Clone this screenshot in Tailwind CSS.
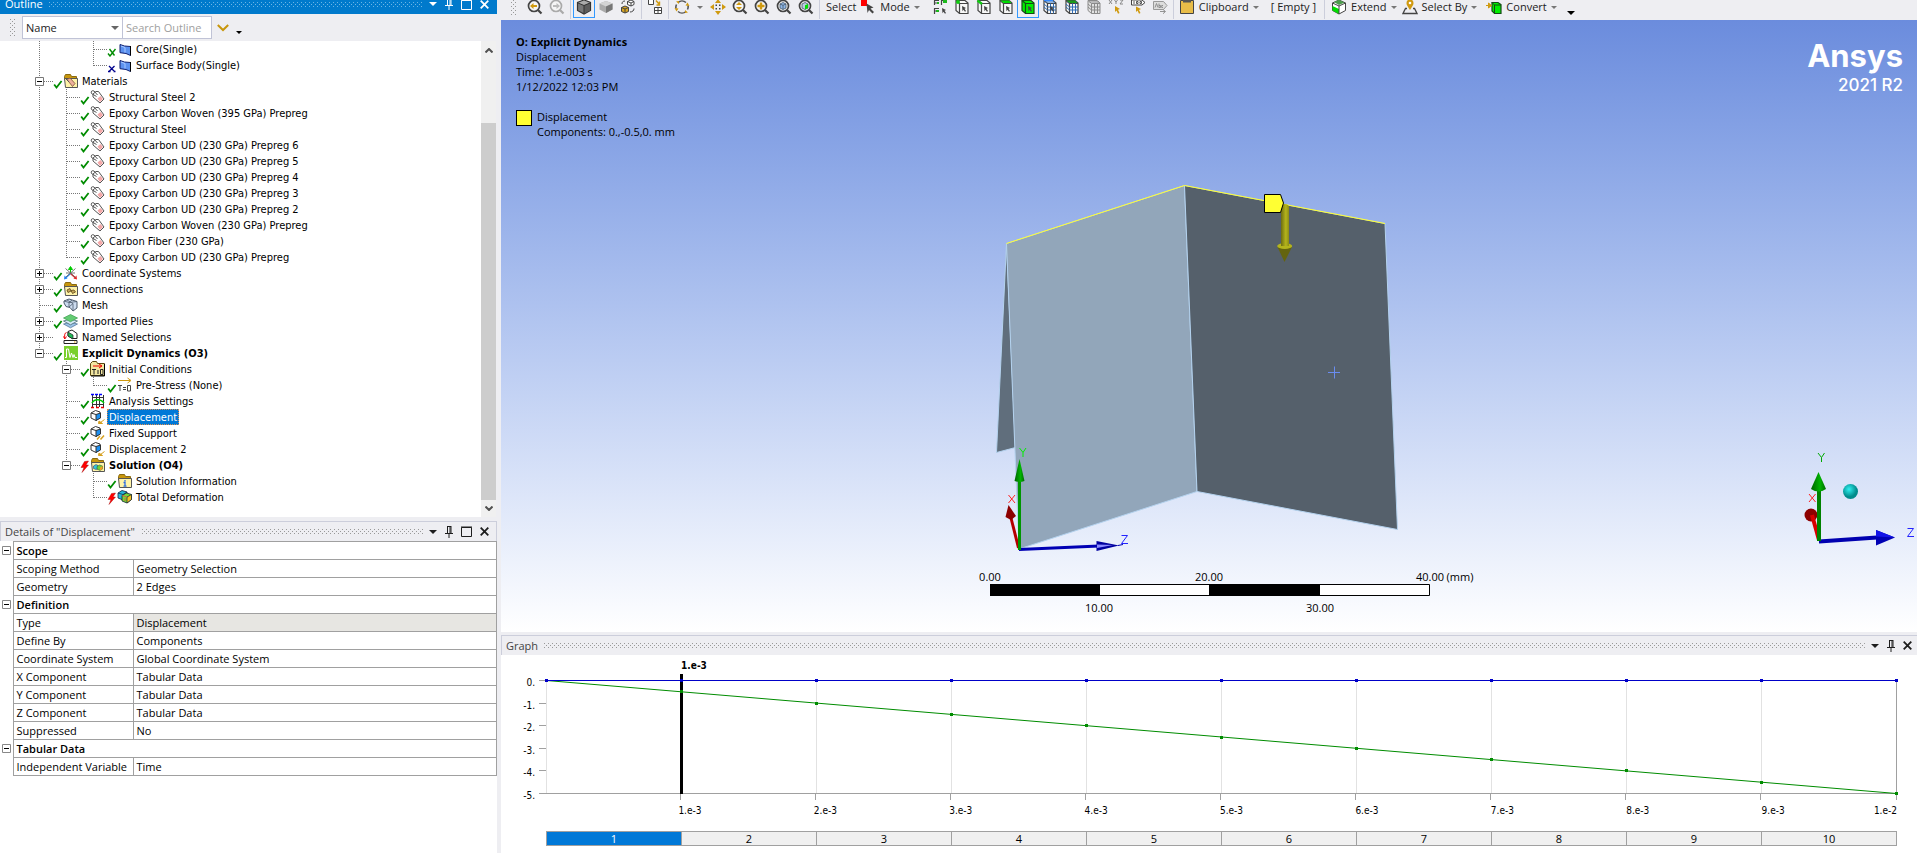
<!DOCTYPE html>
<html lang="en">
<head>
<meta charset="utf-8">
<title>Explicit Dynamics - Mechanical</title>
<script src="https://cdn.jsdelivr.net/npm/@tailwindcss/browser@4"></script>
</head>
<body class="h-screen overflow-hidden bg-[#eeeef2] font-['Open_Sans','Noto_Sans',sans-serif] text-[11px] leading-4 text-[#111]">

<!-- Shared icon definitions -->
<svg class="absolute size-0" aria-hidden="true">
  <defs>
    <pattern id="dotsBlue" width="4" height="4" patternUnits="userSpaceOnUse"><path d="M0 0h1v1H0zM2 2h1v1H2z" fill="#6bb5e6"/></pattern>
    <pattern id="dotsGray" width="4" height="4" patternUnits="userSpaceOnUse"><path d="M0 0h1v1H0zM2 2h1v1H2z" fill="#999"/></pattern>
    <radialGradient id="ball" cx=".4" cy=".35"><stop offset="0" stop-color="#30f0f0"/><stop offset="1" stop-color="#008c8c"/></radialGradient>
    <linearGradient id="shaft"><stop offset="0" stop-color="#6e6e10"/><stop offset=".6" stop-color="#b4b41c"/><stop offset="1" stop-color="#8c8c14"/></linearGradient>
    <linearGradient id="greenHead"><stop offset="0" stop-color="#006400"/><stop offset=".6" stop-color="#00b400"/><stop offset="1" stop-color="#006e00"/></linearGradient>
  </defs>

  <!-- window controls -->
  <symbol id="caret" viewBox="0 0 8 4"><path d="M0 0h8L4 4z" fill="currentColor"/></symbol>
  <symbol id="pin" viewBox="0 0 8 12"><path d="M2 .5h4M2.5 0v7M5 0v7M6 0v7M0 7.5h8M4 8v4" stroke="currentColor" fill="none"/></symbol>
  <symbol id="max" viewBox="0 0 11 11"><path d="M.5 1.5h10v9H.5zM0 1h11" stroke="currentColor" fill="none"/></symbol>
  <symbol id="close" viewBox="0 0 9 9"><path d="M.7.7l7.6 7.6M8.3.7L.7 8.3" stroke="currentColor" stroke-width="1.8" fill="none"/></symbol>
  <symbol id="grip" viewBox="0 0 5 18"><path d="M0 0h1v1H0zM4 0h1v1H4zM2 2h1v1H2zM0 4h1v1H0zM4 4h1v1H4zM2 6h1v1H2zM0 8h1v1H0zM4 8h1v1H4zM2 10h1v1H2zM0 12h1v1H0zM4 12h1v1H4zM2 14h1v1H2zM0 16h1v1H0zM4 16h1v1H4z" fill="#999"/></symbol>

  <!-- status marks -->
  <symbol id="ok" viewBox="0 0 10 16"><path d="M1.2 11.5l2.3 3L8.6 8" stroke="#008c00" stroke-width="1.8" fill="none"/></symbol>
  <symbol id="okx" viewBox="0 0 10 16"><path d="M1 12.5l2 2.5L8.5 8M2.5 8l5 6.5" stroke="#008c00" stroke-width="1.4" fill="none"/></symbol>
  <symbol id="bluex" viewBox="0 0 10 16"><path d="M2 9l5.5 5.5M7.5 9L2 14.5M1 14.5h2.500M6.5 14.5H8.5" stroke="#00008c" stroke-width="1.3" fill="none"/></symbol>
  <symbol id="bolt" viewBox="0 0 10 16"><path d="M4.5 4.5L8.5 4 6 8h2.500L2 15.5 4 10.5H1z" fill="#f00" stroke="#900" stroke-width=".4"/></symbol>

  <!-- tree icons -->
  <symbol id="surface" viewBox="0 0 15 16"><path d="M3 3.500l4.500 1.500 6 .5v9L9 12.500l-6-.8z" fill="#5c92f0" stroke="#102070"/><path d="M4 5l4 1.500v5" stroke="#a8c8ff" fill="none"/><path d="M13.500 5v9.500" stroke="#000"/></symbol>
  <symbol id="folder" viewBox="0 0 15 16"><path d="M1.500 3.500l1-2h5l1 2h5v3h-12z" fill="#c8960c" stroke="#8a6a10"/><path d="M1.500 5.500h13v9h-12z" fill="#fff3a8" stroke="#555"/></symbol>
  <symbol id="materials" viewBox="0 0 15 16"><use href="#folder"/><path d="M4 6.500l3-1.500 5 5.500-2.500 3z" fill="#eeb09c" stroke="#7a5038" stroke-width=".8"/><path d="M3 6l3 3" stroke="#555"/></symbol>
  <symbol id="tag" viewBox="0 0 15 16"><path d="M3 8V5l3-2.500h2.500l5.500 7.500-4 4z" fill="#fff" stroke="#555"/><path d="M7.500 9.500L10.500 7l2.500 3-3 3z" fill="#f4a8a8"/><path d="M6.500 7.500L1.500 4.500C.5 2.500 2 1 4 2l3.500 4" fill="none" stroke="#555"/></symbol>
  <symbol id="coords" viewBox="0 0 15 16"><path d="M7.500 8.500V2.500M5.500 4.500l2-3 2 3z" stroke="#0c0" fill="#0c0"/><path d="M7.500 8.500L2 13.500" stroke="#28f" stroke-width="1.400"/><path d="M1 14.500l.5-4 3 3z" fill="#28f"/><path d="M7.500 8.500l5 4.500" stroke="#e22" stroke-width="1.400"/><path d="M14 14.500l-.5-4-3 3z" fill="#e22"/><path d="M2.500 3.500l10 9M12.500 3.500l-10 9M3 8h9" stroke="#666" stroke-width=".9"/></symbol>
  <symbol id="connections" viewBox="0 0 15 16"><use href="#folder"/><path d="M4 9l3-1.500 1 2.500-3 1.500zM8 9.500l3-.5 1.500 2-3 1.500z" fill="#c9a85c" stroke="#6b5420" stroke-width=".9"/></symbol>
  <symbol id="mesh" viewBox="0 0 15 16"><path d="M1 4l5-2 8 2.500v6.500l-4 3-3-3.500-4-1L1 6z" fill="#cddcf0" stroke="#4c5a6c"/><path d="M1 4l5 1.500 8-1M6 5.500V10l4-3.500V13M4 3l6 3.500M9 3L6 5.500" fill="none" stroke="#4c5a6c" stroke-width=".8"/></symbol>
  <symbol id="plies" viewBox="0 0 15 16"><path d="M.5 11l7 3.800 7-3.800-7-2z" fill="#9cc3e8" stroke="#456a90" stroke-width=".7"/><path d="M.5 8l7 3.800 7-3.800-7-2z" fill="#d6e9fa" stroke="#456a70" stroke-width=".8"/><path d="M.5 5l7-3.500 7 3.500-7 3.800z" fill="#64cc74" stroke="#3a9c4c" stroke-width=".7"/></symbol>
  <symbol id="named" viewBox="0 0 15 16"><path d="M1 11.500h13v3H1z" fill="#fff" stroke="#222"/><path d="M5 2.500l4-1.500 5 3.500v5H9L5 7z" fill="#fff" stroke="#222"/><path d="M5 3l5 3v4L5 7z" fill="#1db954" stroke="#222" stroke-width=".7"/><path d="M3.500 3.500C1.500 4 1.500 6 1.800 9M.5 7.500L1.800 10l1.700-2.500" stroke="#e00" fill="none"/><path d="M11 13h1.500" stroke="#d90"/></symbol>
  <symbol id="explicit" viewBox="0 0 15 16"><path d="M1 1h14v14H1z" fill="#7ad02c"/><path d="M2 12.500h1.500V4h2l1.500 8.500L8.500 8l1.500 4.500 1-3 1 3h2" stroke="#fff" fill="none"/></symbol>
  <symbol id="initial" viewBox="0 0 15 16"><path d="M.5 14.500V2.500l2-2h4l1 2h7v12z" fill="#f2e6a0" stroke="#5a4a10"/><path d="M14.500 3v12H1" stroke="#000" fill="none"/><path d="M3 5h8M9 3l3 2-3 2" stroke="#e00" fill="none"/><path d="M2 8.500h4M4 8.500v5M7 10h2M7 12h2M10.500 8.500h2.500v5h-2.500z" stroke="#222" fill="none"/></symbol>
  <symbol id="prestress" viewBox="0 0 15 16"><path d="M1 3.500h12M10.500 1l3.500 2.500L10.500 6" stroke="#d09a10" fill="none"/><path d="M1 8.500h4M3 8.500V14M6 10.500h3M6 12.500h3M10.500 8.500h3V14h-3z" stroke="#444" fill="none"/></symbol>
  <symbol id="analysis" viewBox="0 0 15 16"><path d="M2.500 2v12M6.500 2v12M9.500 2v12M13.500 2v12M2 4.500h12M2 11.500h12" stroke="#333" fill="none"/><path d="M2 10C4 5.500 11 5.500 14 10" stroke="#0c0" stroke-width="1.500" fill="none"/><path d="M1 1.500h3M5 1.500h3M9 1.500h3" stroke="#00f" stroke-width="1.400"/><path d="M1 14.500h3M6 14.500h3M11 14.500h3" stroke="#e00" stroke-width="1.400"/></symbol>
  <symbol id="load" viewBox="0 0 15 16"><path d="M1 4l4.500-2.500L10 3v5.500L6 11.500 1 9z" fill="#fff" stroke="#333"/><path d="M6 5.500L10.500 4v5L6 11.500z" fill="#1e90f0" stroke="#333"/><path d="M1 4l5 1.500" stroke="#333"/></symbol>
  <symbol id="displ" viewBox="0 0 15 16"><use href="#load"/><path d="M14.500 10.500l-4 3M9 12l-.5 2.500 4 0z" stroke="#d6a020" fill="#d6a020"/></symbol>
  <symbol id="fixed" viewBox="0 0 15 16"><use href="#load"/><path d="M7 14.500l3-3.500M10.500 14.500l3.500-4" stroke="#d6a020" stroke-width="1.500"/></symbol>
  <symbol id="solution" viewBox="0 0 15 16"><use href="#folder"/><path d="M3.500 9L6 7.500l2 1V12l-2 .5-2.500-1z" fill="#35c6d8" stroke="#226" stroke-width=".5"/><path d="M7 9.500L9.500 8l3 1v3L10 13.500 7 12z" fill="#6dd03a" stroke="#243" stroke-width=".5"/><path d="M10 10.500l2.500-1.500v3L10 13.500z" fill="#f6a020"/></symbol>
  <symbol id="info" viewBox="0 0 15 16"><use href="#folder"/><path d="M8 7v1.500M6.500 9.500H8V13M6.500 13.200h3" stroke="#2a6be0" stroke-width="1.300" fill="none"/></symbol>
  <symbol id="deform" viewBox="0 0 15 16"><path d="M1 4l4-2.500L10 3v5l-4 3-5-2z" fill="#28b8d8" stroke="#124" stroke-width=".8"/><path d="M1 4l5 1.500L10 3" stroke="#124" stroke-width=".7" fill="none"/><path d="M5 6.500L9.500 4l5 1.500v5L10 14l-5-2z" fill="#76d838" stroke="#123" stroke-width=".8"/><path d="M10 8l4.500-2.500v5L10 14z" fill="#f6c020" stroke="#123" stroke-width=".7"/><path d="M5 6.500L10 8M8 9v3" stroke="#e44" stroke-width=".8"/></symbol>

  <!-- toolbar icons -->
  <symbol id="mag" viewBox="0 0 16 16"><circle cx="7" cy="7" r="5.500" fill="#f6f6f6" stroke="currentColor" stroke-width="1.700"/><path d="M11 11l3.500 3.500" stroke="currentColor" stroke-width="2.200"/></symbol>
  <symbol id="tback" viewBox="0 0 16 16"><use href="#mag"/><path d="M3 7l3.500-3v2h3.500v2H6.500v2z" fill="#d09a10"/></symbol>
  <symbol id="tfwd" viewBox="0 0 16 16"><use href="#mag"/><path d="M11 7L7.500 4v2H4v2h3.500v2z" fill="#bbb"/></symbol>
  <symbol id="tcube" viewBox="0 0 16 16"><path d="M8 1l6.500 2.500v8L8 15l-6.500-3.500v-8z" fill="#777" stroke="#333" stroke-width="1.200"/><path d="M8 1.500L14 4 8 6.500 2 4z" fill="#aaa"/><path d="M8 6.500L14 4v7.300L8 14.500z" fill="#5c5c5c"/><path d="M2 4l6 2.500L14 4M8 6.500v8" stroke="#333" fill="none"/></symbol>
  <symbol id="tshade" viewBox="0 0 16 16"><path d="M8 2l6.500 2.500v6L8 14l-6.500-3.500v-6z" fill="#aaa"/><path d="M8 2l6.500 2.500L8 7.500 1.500 4.500z" fill="#d4d4d4"/><path d="M8 7.500l6.500-3v6L8 14z" fill="#777"/></symbol>
  <symbol id="tswap" viewBox="0 0 16 16"><path d="M7.500 2.500L11 1l3 1.500v3l-3 1.500-3.500-1.500z" fill="#fff" stroke="#444"/><path d="M7.500 2.500L11 4v3M11 4l3-1.500" fill="none" stroke="#444"/><path d="M1.500 8.500L5 7l3.500 1.500v4L5 14l-3.500-1.500z" fill="#d8a420" stroke="#444"/><path d="M1.500 8.500L5 10l3.500-1.500M5 10v4M2 5c0-2 1-3 3-3M14 9.500c0 2-1.500 3.500-4 3.500" fill="none" stroke="#444"/></symbol>
  <symbol id="tlayout" viewBox="0 0 16 16"><path d="M1.500.5h5v5h-5z" fill="#fff" stroke="#444"/><path d="M7.500 8.500h7v6h-7zM11 8.500v6M7.500 11.500h7" fill="#fff" stroke="#444"/><path d="M9 1.500l3 3.500M12.500 2.500V6H9.500" stroke="#d09a10" fill="none" stroke-width="1.400"/></symbol>
  <symbol id="trotate" viewBox="0 0 16 16"><path d="M4 3.500A6 6 0 0112 3.500M4 12.500A6 6 0 0012 12.500M2 9.500A6 6 0 012.500 5.500M14 6.500A6 6 0 0113.500 10.500" fill="none" stroke="#555" stroke-width="1.600"/><path d="M2 2.500L5 2v3zM14 13.500L11 14v-3zM.5 9l2 3.500L4.500 9.500zM15.500 7l-2-3.500-2 3z" fill="#d09a10"/></symbol>
  <symbol id="tpan" viewBox="0 0 16 16"><path d="M8 0l3 4H5zM8 16l3-4H5zM0 8l4-3v6zM16 8l-4-3v6z" fill="#d09a10"/><path d="M5.500 5.500h1.500v1.500h-1.500zM9 5.500h1.500v1.500H9zM5.500 9H7v1.500H5.500zM9 9h1.500v1.500H9z" fill="#444"/></symbol>
  <symbol id="tzoom" viewBox="0 0 16 16"><use href="#mag"/><path d="M7 3l3 3H4zM7 11l3-3H4z" fill="#d09a10"/></symbol>
  <symbol id="tplus" viewBox="0 0 16 16"><use href="#mag"/><path d="M7 3.500v7M3.500 7h7" stroke="#d09a10" stroke-width="2.400"/></symbol>
  <symbol id="tfit" viewBox="0 0 16 16"><use href="#mag"/><path d="M7 3.500L10 5v4l-3 1.500L4 9V5z" fill="#8fb8ea" stroke="#456" stroke-width=".8"/><path d="M4 5l3 1.300L10 5M7 6.300v4" stroke="#456" stroke-width=".8" fill="none"/></symbol>
  <symbol id="tfitg" viewBox="0 0 16 16"><use href="#mag"/><path d="M7 3.500L10 5v4l-3 1.500L4 9V5z" fill="#bcd" stroke="#456" stroke-width=".8"/><path d="M7 6.300L10 5v4l-3 1.500z" fill="#0d0"/></symbol>
  <symbol id="tmode" viewBox="0 0 16 16"><path d="M1 0h6v7H1z" fill="#f00"/><path d="M6.500 4.500l7 4-3 1 3.500 3.500-1.500 1.500L9 11l-1.500 3z" fill="#444"/></symbol>
  <symbol id="tfilter" viewBox="0 0 16 16"><path d="M2 1.500h5M2.500 1.500V6M2 9.500h5M2.500 9.500V15M9 1.500h6M9.500 1.500V6M2 4h4M2 12h4" stroke="#444" fill="none" stroke-width="1.200"/><path d="M11 1h4v3h-4zM5 3h2v2H5zM4 11h3v2H4z" fill="#1cb81c"/><path d="M10 9l4 2-1.500.8L14 14l-1 .8-1.500-2-1 1.500z" fill="#444"/></symbol>
  <symbol id="tbox" viewBox="0 0 16 16"><path d="M2 1.500h9L14 4v10.500H5.500L2 11.500z" fill="#f8f8f8" stroke="#444" stroke-width="1.200"/><path d="M2 1.500L5.500 4.500H14M5.500 4.500v10" stroke="#444" stroke-width="1.200" fill="none"/></symbol>
  <symbol id="tptr" viewBox="0 0 16 16"><path d="M8 7l4 2-1.500.8L12 12l-1 .8-1.500-2-1 1.500z" fill="#444"/></symbol>
  <symbol id="tvertex" viewBox="0 0 16 16"><use href="#tbox"/><circle cx="4" cy="3" r="2" fill="#1c1"/><use href="#tptr"/></symbol>
  <symbol id="tedge" viewBox="0 0 16 16"><use href="#tbox"/><path d="M1.500 1.500L6 5" stroke="#1c1" stroke-width="2.400"/><use href="#tptr"/></symbol>
  <symbol id="tface" viewBox="0 0 16 16"><use href="#tbox"/><path d="M2.500 1.500H11L13.500 4h-8z" fill="#0d0"/><use href="#tptr"/></symbol>
  <symbol id="tbody" viewBox="0 0 16 16"><path d="M2 1.500h9L14 4v10.500H5.500L2 11.500z" fill="#0e0" stroke="#154a15" stroke-width="1.200"/><path d="M2 1.500L5.500 4.500H14M5.500 4.500v10" stroke="#154a15" stroke-width="1.200" fill="none"/><use href="#tptr"/></symbol>
  <symbol id="tgrid" viewBox="0 0 16 16"><use href="#tbox"/><path d="M5.500 8H14M5.500 11H14M8.500 4.500v10M11.500 4.500v10M3.500 3H13M2 5l3.500 3M2 8l3.500 3" stroke="currentColor" fill="none"/></symbol>
  <symbol id="tgrida" viewBox="0 0 16 16"><use href="#tgrid"/><path d="M2 1.500h9" stroke="#38f" stroke-width="1.500"/><use href="#tptr"/></symbol>
  <symbol id="tgridb" viewBox="0 0 16 16"><use href="#tgrid"/><path d="M2.500 1.500H11L13.500 4h-8z" fill="#1a9c1a"/></symbol>
  <symbol id="tgridc" viewBox="0 0 16 16"><path d="M2 1.500h9L14 4v10.500H5.500L2 11.500zM2 1.500L5.500 4.500H14M5.500 4.500v10M5.500 8H14M5.500 11H14M8.500 4.500v10M11.500 4.500v10M3.500 3H13M2 5l3.500 3M2 8l3.500 3" fill="#e2e2e2" stroke="#8a8a8a"/></symbol>
  <symbol id="txyz" viewBox="0 0 16 16"><path d="M1 1l3 4M4 1L1 5M6.500 1L8 3l1.500-2M8 3v2M12 1h3l-3 4h3" stroke="#888" fill="none"/><path d="M7 7l5 3-2 .8 1.500 3.200-1.500.8-1.500-3.300L7 13z" fill="#d09a10"/></symbol>
  <symbol id="tprobe" viewBox="0 0 16 16"><path d="M1.500 1h10.500l3 2.500-3 2.500H1.500z" fill="#fff" stroke="#444"/><path d="M4 2v3M6.500 2.500h1.500v2H6.500zM10 2.500h1.500v2H10z" stroke="#444" fill="none" stroke-width=".9"/><path d="M6 7.500l5 2.500-2 1 1.500 3-1.500.8-1.500-3.300L6 13z" fill="#d09a10"/></symbol>
  <symbol id="tabc" viewBox="0 0 16 16"><path d="M1.500 2.500h10l3.500 4-3.500 4h-10z" fill="#ddd" stroke="#999"/><path d="M3 8.500l1.500-4L6 8.500M7 4.500v4h1.500v-2H7M11 6.500H9.700v2H11M8 12.500h5M11 10.500l2.500 2-2.500 2.200" stroke="#888" fill="none" stroke-width=".9"/></symbol>
  <symbol id="tclip" viewBox="0 0 16 16"><path d="M1.500 1.500h13v13h-13z" fill="#e8bc48" stroke="#444"/><path d="M4 .5h8v3H4z" fill="#555"/></symbol>
  <symbol id="textend" viewBox="0 0 16 16"><path d="M8 1l6.500 3v7.500L8 15l-6.500-3.500V4z" fill="#fff" stroke="#444"/><path d="M1.500 7L8 10v5l-6.500-3.500z" fill="#0d0"/><path d="M3 3L8 .8 13.500 3.500 8 6z" fill="#4c9c4c"/><path d="M1.500 4L8 7l6.500-3M8 7v8" stroke="#444" fill="none"/></symbol>
  <symbol id="tselby" viewBox="0 0 16 16"><path d="M8 11C5.500 7 4.500 6 4.500 4a3.500 3.500 0 017 0c0 2-1 3-3.500 7z" fill="#d09a10"/><circle cx="8" cy="4" r="1.300" fill="#fff"/><path d="M5 9.500H3.500L1 14.500h14L12.500 9.500H11" fill="none" stroke="#444" stroke-width="1.300"/></symbol>
  <symbol id="tconvert" viewBox="0 0 16 16"><path d="M6 3.500h6l3 2v9H8.500L6 12z" fill="#0e0" stroke="#154a15" stroke-width="1.200"/><path d="M6 3.500L8.500 6H15M8.500 6v8.500" stroke="#154a15" fill="none"/><path d="M0 6.500h4M2.500 4l3 2.500-3 2.500z" stroke="#d09a10" fill="#d09a10"/></symbol>
</svg>

<div class="flex h-screen gap-1">

  <!-- Left dock -->
  <aside class="flex w-[497px] shrink-0 flex-col gap-1">

    <section class="flex min-h-0 flex-1 flex-col" aria-label="Outline">
      <div class="flex h-3.5 shrink-0 items-end overflow-hidden bg-[#007acc] text-white">
        <header class="flex h-5 flex-1 shrink-0 items-center pl-[5px] pr-2">
          <h2 class="mr-1.5">Outline</h2>
          <svg class="h-[5px] flex-1"><rect width="100%" height="5" fill="url(#dotsBlue)"/></svg>
          <div class="ml-1.5 flex items-center gap-2">
            <button aria-label="Menu"><svg class="h-1 w-2"><use href="#caret"/></svg></button>
            <button aria-label="Pin"><svg class="h-3 w-2"><use href="#pin"/></svg></button>
            <button aria-label="Maximize"><svg class="size-[11px]"><use href="#max"/></svg></button>
            <button aria-label="Close"><svg class="size-[9px]"><use href="#close"/></svg></button>
          </div>
        </header>
      </div>

      <div class="flex h-[27px] shrink-0 items-center pl-2.5">
        <svg class="mr-[7px] h-[18px] w-[5px]"><use href="#grip"/></svg>
        <div class="relative">
          <select aria-label="Search by" class="h-[23px] w-[101px] appearance-none border border-[#c0c3d6] bg-white pl-[3px] text-[11px] text-[#222]"><option>Name</option><option>Tag</option><option>Type</option></select>
          <svg class="pointer-events-none absolute right-1 top-2.5 h-1 w-2 text-[#666]"><use href="#caret"/></svg>
        </div>
        <input type="text" aria-label="Search Outline" placeholder="Search Outline" class="h-[23px] w-[89px] border border-l-0 border-[#c0c3d6] bg-white pl-[3px] text-[11px] placeholder:text-[#a0a0a0]">
        <button aria-label="Next match" class="ml-[5px]"><svg class="h-2 w-3" viewBox="0 0 12 8"><path d="M.8 1l5.200 5L11.200 1" stroke="#c8960c" stroke-width="2" fill="none"/></svg></button>
        <button aria-label="Toolbar options" class="ml-[7px] mt-2.5 text-black"><svg class="h-[3px] w-1.5"><use href="#caret"/></svg></button>
      </div>

      <div class="mr-px flex min-h-0 flex-1 bg-white">
        <ul id="tree" role="tree" class="flex-1 overflow-hidden pl-[26px] font-['DejaVu_Sans_Condensed','DejaVu_Sans',sans-serif] leading-[14px] text-black"></ul>
        <div class="flex w-[15px] flex-col bg-[#f0f0f0]">
          <button aria-label="Scroll up" class="flex h-[18px] items-center justify-center"><svg class="h-[5px] w-2" viewBox="0 0 8 5"><path d="M.5 4.500L4 1l3.500 3.500" stroke="#505050" stroke-width="2" fill="none"/></svg></button>
          <div class="h-16"></div>
          <div class="flex-1 bg-[#cdcdcd]"></div>
          <button aria-label="Scroll down" class="flex h-[17px] items-center justify-center"><svg class="h-[5px] w-2" viewBox="0 0 8 5"><path d="M.5.5L4 4 7.500.5" stroke="#505050" stroke-width="2" fill="none"/></svg></button>
        </div>
      </div>
    </section>

    <section class="flex h-[332px] shrink-0 flex-col bg-white" aria-label="Details">
      <header class="flex h-5 shrink-0 items-center border border-b-0 border-[#cccedb] bg-[#eeeef2] pl-1 pr-[7px] text-[#444]">
        <h2 class="mr-[7px]">Details of "Displacement"</h2>
        <svg class="h-[5px] flex-1"><rect width="100%" height="5" fill="url(#dotsGray)"/></svg>
        <div class="ml-1.5 flex items-center gap-2 text-[#1e1e1e]">
          <button aria-label="Menu"><svg class="h-1 w-2"><use href="#caret"/></svg></button>
          <button aria-label="Pin"><svg class="h-3 w-2"><use href="#pin"/></svg></button>
          <button aria-label="Maximize"><svg class="size-[11px]"><use href="#max"/></svg></button>
          <button aria-label="Close"><svg class="size-[9px]"><use href="#close"/></svg></button>
        </div>
      </header>
      <table class="w-full table-fixed border-collapse text-black">
        <colgroup><col class="w-[13px]"><col class="w-[120px]"><col></colgroup>
        <tbody id="details"></tbody>
      </table>
    </section>
  </aside>

  <!-- Right dock -->
  <main class="flex min-w-0 flex-1 flex-col gap-[3px]">
    <div class="flex min-h-0 flex-1 flex-col">
      <div class="flex h-5 shrink-0 items-end overflow-hidden">
        <div id="toolbar" role="toolbar" aria-label="Graphics" class="flex h-[26px] shrink-0 items-center pl-2.5 text-[#222]"></div>
      </div>

      <div class="relative min-h-0 flex-1 overflow-hidden bg-linear-to-b from-[#6b8cdd] to-white">
        <svg class="size-full" viewBox="501 20 1416 612" role="img" aria-label="Folded surface model with displacement load">
          <path d="M1006.500 243.500L996.500 452.500l19-5z" fill="#606e7c" stroke="#b4d2ee"/>
          <path d="M1006.500 243.500l178-58 12.500 306-178 57.500z" fill="#92a6ba" stroke="#b4d2ee"/>
          <path d="M1184.500 185.500l200.500 38 12.500 306-200.500-38z" fill="#55606b" stroke="#b4d2ee"/>
          <path d="M1006.500 243.500l178-58 200.500 38" fill="none" stroke="#ffff30"/>
          <path d="M1328 372.500h12M1334.500 366.500v12" stroke="#6a8cf0"/>
          <!-- load arrow and tag -->
          <path d="M1281 206q4-4 8 0v41h-8z" fill="url(#shaft)"/>
          <path d="M1277.500 247h14.500l-7.500 15z" fill="#64640f"/>
          <ellipse cx="1284.700" cy="246" rx="7.500" ry="3" fill="#b4b41c"/><path d="M1281 242h8v4h-8z" fill="url(#shaft)"/>
          <path d="M1264.500 194.500h16l3 8.500-3 9.500h-16z" fill="#ffff33" stroke="#000"/>
          <!-- origin triad -->
          <path d="M1018.500 548L1011 518" stroke="#b40000" stroke-width="3"/><path d="M1008.500 505l7.500 11-5 4-5.500-3z" fill="#8c0000"/>
          <path d="M1019 549.500l80-3.500" stroke="#0000b4" stroke-width="3"/><path d="M1096.500 541l22.500 4.500-22.500 5.500z" fill="#0000a0"/><path d="M1097 544.500l16 .5-16 3z" fill="#8c8cff"/><path d="M1118 545.500l5-1" stroke="#0000b4"/>
          <path d="M1019.500 550v-70" stroke="#009600" stroke-width="3"/><path d="M1019.500 459l5 22q-5 2-10 0z" fill="url(#greenHead)"/>
          <g fill="none">
            <path d="M1019.500 448l3.500 4.500 3-4.500M1023 452.500v4.500" stroke="#0e0"/>
            <path d="M1008.500 495l6.500 8M1015 495l-6.500 8" stroke="#f22"/>
            <path d="M1121.500 535.500h6l-6 8h6.500" stroke="#22f"/>
          </g>
          <!-- ruler -->
          <path d="M990.500 584.500h439v11h-439z" fill="#fff" stroke="#000"/><path d="M990 584h110v12H990zM1209 584h111v12h-111z"/>
          <g text-anchor="middle" font-size="11" fill="#000">
            <text x="990" y="581">0.00</text><text x="1209" y="581">20.00</text><text x="1430" y="581">40.00</text>
            <text x="1099" y="612">10.00</text><text x="1320" y="612">30.00</text><text x="1460" y="581">(mm)</text>
          </g>
        </svg>

        <div class="absolute left-[15px] top-3.5 text-black">
          <div class="leading-[15px]">
            <p class="font-bold">O: Explicit Dynamics</p>
            <p>Displacement</p>
            <p>Time: 1.e-003 s</p>
            <p>1/12/2022 12:03 PM</p>
          </div>
          <div class="mt-[15px] flex gap-[5px] leading-[15px]">
            <span class="mt-px size-4 border border-black bg-[#ffff33]"></span>
            <p>Displacement<br>Components: 0.,-0.5,0. mm</p>
          </div>
        </div>

        <div class="absolute right-3.5 top-[18px] text-right text-white">
          <p class="font-['Inter',sans-serif] text-[31px] font-bold leading-9">Ansys</p>
          <p class="font-['Inter',sans-serif] text-[17px] font-medium leading-[22px]">2021 R2</p>
        </div>

        <svg class="absolute bottom-[86px] right-0 h-[98px] w-[117px]" viewBox="1800 448 117 98" aria-label="View triad">
          <circle cx="1811" cy="515" r="6.500" fill="#8c0000"/><path d="M1819 540l-7-25" stroke="#d80000" stroke-width="4"/>
          <path d="M1819 541.500l58-4" stroke="#0000b0" stroke-width="4"/><path d="M1876 530l19 7.500-19 8z" fill="#0000b4"/><path d="M1876 530l19 7.500-19-1z" fill="#1414e8"/>
          <path d="M1819 541v-50" stroke="#008200" stroke-width="4"/><path d="M1818.500 472l7.500 17q-7.500 5-15 0z" fill="url(#greenHead)"/>
          <circle cx="1850.500" cy="491.500" r="7.500" fill="url(#ball)"/>
          <g fill="none">
            <path d="M1818 453l3.500 4.500 3-4.500M1821.500 457.500v4.500" stroke="#0a0"/>
            <path d="M1809 494l6.500 8M1815.500 494l-6.500 8" stroke="#f22"/>
            <path d="M1907.500 528.500h6l-6 8h6.500" stroke="#22f"/>
          </g>
        </svg>
      </div>
    </div>

    <section class="flex h-[218px] shrink-0 flex-col bg-white" aria-label="Graph">
      <header class="flex h-5 shrink-0 items-center border-l border-t border-[#cccedb] bg-[#eeeef2] pl-1 pr-[5px] text-[#444]">
        <h2 class="mr-1.5">Graph</h2>
        <svg class="h-[5px] flex-1"><rect width="100%" height="5" fill="url(#dotsGray)"/></svg>
        <div class="ml-1.5 flex items-center gap-2 text-[#1e1e1e]">
          <button aria-label="Menu"><svg class="h-1 w-2"><use href="#caret"/></svg></button>
          <button aria-label="Pin"><svg class="h-3 w-2"><use href="#pin"/></svg></button>
          <button aria-label="Close"><svg class="size-[9px]"><use href="#close"/></svg></button>
        </div>
      </header>

      <div class="flex flex-1 pr-5 pt-[3px] font-['DejaVu_Sans_Condensed','DejaVu_Sans',sans-serif] text-[10px] text-black">
        <div class="mr-[11px] mt-[17px] flex h-[129px] w-[34px] flex-col justify-between text-right">
          <span>0.</span><span>-1.</span><span>-2.</span><span>-3.</span><span>-4.</span><span>-5.</span>
        </div>
        <div class="flex-1">
          <div class="grid h-4 grid-cols-10 font-bold"><span class="col-start-2">1.e-3</span></div>
          <svg id="plot" class="h-[126px] w-full overflow-visible" viewBox="0 0 1351 126" preserveAspectRatio="none" role="img" aria-label="Displacement components over time"></svg>
          <div id="times" class="-ml-[3px] grid h-[22px] grid-cols-10 items-center"></div>
          <div id="steps" class="mt-[9px] grid grid-cols-10 border-l border-[#a0a0a0] font-['Open_Sans','Noto_Sans',sans-serif] text-[11px]"></div>
        </div>
      </div>
    </section>
  </main>
</div>

<script>
// Outline tree: [guides, status, icon, label, style]
// guides, one letter per level: space none, v line, t branch, l last branch, + / - expander, e last expander
const rows = [
  ['v t','okx','surface','Core(Single)'],
  ['v l','bluex','surface','Surface Body(Single)'],
  ['-','ok','materials','Materials'],
  ...['Structural Steel 2','Epoxy Carbon Woven (395 GPa) Prepreg','Structural Steel','Epoxy Carbon UD (230 GPa) Prepreg 6','Epoxy Carbon UD (230 GPa) Prepreg 5','Epoxy Carbon UD (230 GPa) Prepreg 4','Epoxy Carbon UD (230 GPa) Prepreg 3','Epoxy Carbon UD (230 GPa) Prepreg 2','Epoxy Carbon Woven (230 GPa) Prepreg','Carbon Fiber (230 GPa)'].map(n => ['vt','ok','tag',n]),
  ['vl','ok','tag','Epoxy Carbon UD (230 GPa) Prepreg'],
  ['+','ok','coords','Coordinate Systems'],
  ['+','ok','connections','Connections'],
  ['t','ok','mesh','Mesh'],
  ['+','ok','plies','Imported Plies'],
  ['+','','named','Named Selections'],
  ['e','ok','explicit','Explicit Dynamics (O3)','bold'],
  [' -','ok','initial','Initial Conditions'],
  [' vl','ok','prestress','Pre-Stress (None)'],
  [' t','ok','analysis','Analysis Settings'],
  [' t','ok','displ','Displacement','selected'],
  [' t','ok','fixed','Fixed Support'],
  [' t','ok','displ','Displacement 2'],
  [' e','bolt','solution','Solution (O4)','bold'],
  ['  t','ok','info','Solution Information'],
  ['  l','bolt','deform','Total Deformation'],
];
const labelClass = {
  bold: 'ml-0.5 px-0.5 pt-0.5 font-bold',
  selected: 'ml-0.5 px-0.5 pt-0.5 bg-[#0078d7] text-white outline-1 -outline-offset-1 outline-dotted outline-[#e09050]',
  normal: 'ml-0.5 px-0.5 pt-0.5',
};
function guide(g) {
  let s = '';
  if ('vt+-'.includes(g)) s += '<path d="M13.5 0v16" stroke="#777" stroke-dasharray="1 1"/>';
  if ('le'.includes(g)) s += '<path d="M13.5 0v9" stroke="#777" stroke-dasharray="1 1"/>';
  if ('tl+-e'.includes(g)) s += '<path d="M14 8.5h14" stroke="#777" stroke-dasharray="1 1"/>';
  if ('+-e'.includes(g)) s += '<path d="M9.5 4.5h8v8h-8z" fill="#fff" stroke="#777"/><path d="M11 8.5h5" stroke="#000"/>';
  if (g === '+') s += '<path d="M13.5 6v5" stroke="#000"/>';
  return '<svg class="h-4 w-[27px] shrink-0">' + s + '</svg>';
}
document.getElementById('tree').innerHTML = rows.map(([g, st, ic, name, style]) =>
  '<li role="treeitem" class="flex h-4 items-center whitespace-nowrap">' + [...g].map(guide).join('') +
  '<svg class="h-4 w-2.5 shrink-0">' + (st ? '<use href="#' + st + '"/>' : '') + '</svg>' +
  '<svg class="h-4 w-[15px] shrink-0"><use href="#' + ic + '"/></svg>' +
  '<span class="' + labelClass[style || 'normal'] + '">' + name + '</span></li>').join('');

// Details grid
const details = [
  ['Scope'], ['Scoping Method','Geometry Selection'], ['Geometry','2 Edges'],
  ['Definition'], ['Type','Displacement'], ['Define By','Components'], ['Coordinate System','Global Coordinate System'],
  ['X Component','Tabular Data'], ['Y Component','Tabular Data'], ['Z Component','Tabular Data'], ['Suppressed','No'],
  ['Tabular Data'], ['Independent Variable','Time'],
];
document.getElementById('details').innerHTML = details.map(([k, v]) => v === undefined
  ? '<tr><td class="h-[18px] p-0 pl-0.5"><button aria-label="Collapse ' + k + '" class="block"><svg class="size-[9px]"><path d="M.5.5h8v8h-8z" fill="#fff" stroke="#888"/><path d="M2 4.5h5" stroke="#000"/></svg></button></td><th colspan="2" class="h-[18px] border border-[#a0a0a0] p-0 pl-[3px] text-left font-semibold">' + k + '</th></tr>'
  : '<tr><td class="h-[18px] p-0"></td><th class="h-[18px] whitespace-nowrap border border-[#a0a0a0] p-0 pl-[3px] text-left font-normal">' + k + '</th><td class="' +
    (k === 'Type' ? 'h-[18px] border border-[#a0a0a0] bg-[#e7e6e2] p-0 pl-[3px]' : 'h-[18px] border border-[#a0a0a0] p-0 pl-[3px]') + '">' + v + '</td></tr>').join('');

// Graphics toolbar
const sep = '<span class="mx-0.5 h-6 w-px shrink-0 bg-[#cccedb]"></span>';
const caret = '<svg class="h-[3px] w-1.5 text-[#777]"><use href="#caret"/></svg>';
const b = (id, name, tone) => '<button aria-label="' + name + '" class="' + ({
  on: 'flex h-[22px] w-[22px] items-center justify-center border border-[#3399ff] text-[#444]',
  dim: 'flex h-[22px] w-[22px] items-center justify-center text-[#aaa]',
  blue: 'flex h-[22px] w-[22px] items-center justify-center text-[#2f6cb5]',
})[tone] + '"><svg class="size-4 shrink-0"><use href="#' + id + '"/></svg></button>';
const n = (id, name) => '<button aria-label="' + name + '" class="flex h-[22px] w-[22px] items-center justify-center text-[#444]"><svg class="size-4"><use href="#' + id + '"/></svg></button>';
const m = (id, name) => '<button class="flex h-[22px] items-center gap-1"><svg class="size-4"><use href="#' + id + '"/></svg>' + name + caret + '</button>';
document.getElementById('toolbar').innerHTML =
  '<svg class="mr-2 h-[18px] w-[5px]"><use href="#grip"/></svg>' +
  n('tback','Previous view') + b('tfwd','Next view','dim') + sep +
  b('tcube','Shaded with edges','on') + n('tshade','Shaded') + n('tswap','Swap view') + sep +
  n('tlayout','Viewports') + sep + n('trotate','Rotate') +
  '<button aria-label="Rotate options" class="mx-1">' + caret + '</button>' +
  n('tpan','Pan') + n('tzoom','Zoom') + n('tplus','Box zoom') + n('tfit','Zoom to fit') + n('tfitg','Zoom to selection') + sep +
  '<span class="mx-1">Select</span>' + m('tmode','Mode') + '<span class="w-[9px]"></span>' +
  n('tfilter','Smart select') + n('tvertex','Vertex') + n('tedge','Edge') + n('tface','Face') + b('tbody','Body','on') +
  b('tgrida','Node','blue') + b('tgridb','Element face','blue') + b('tgridc','Element','dim') +
  n('txyz','Hit point coordinates') + n('tprobe','Probe') + n('tabc','Label') + sep + '<span class="w-[3px]"></span>' +
  m('tclip','Clipboard') + '<span class="ml-3 mr-2">[ Empty ]</span>' +
  '<span class="mr-1.5 h-6 w-px bg-[#cccedb]"></span>' +
  m('textend','Extend') + '<span class="w-[5px]"></span>' + m('tselby','Select By') + '<span class="w-[9px]"></span>' + m('tconvert','Convert') +
  '<button aria-label="Toolbar options" class="ml-2.5 mt-3 text-black"><svg class="h-1 w-2"><use href="#caret"/></svg></button>';

// Graph: X and Z stay at 0, Y ramps to -5
const X = i => i * 135 + .5, Y = v => 6.5 + v * 22.6;
let p = '';
for (let i = 0; i < 10; i++) p += '<path d="M' + X(i) + ' 6.5V119" stroke="#e2e2e2"/>';
for (let i = 1; i <= 10; i++) p += '<path d="M' + (X(i) - (i < 10 ? 1 : 0)) + ' 119v7" stroke="#a0a0a0"/>';
for (let v = 0; v <= 5; v++) p += '<path d="M-7 ' + (Math.floor(Y(v)) + .5) + 'h7" stroke="#a0a0a0"/>';
p += '<path d="M0 119.5H1350.5V6.5" fill="none" stroke="#a0a0a0"/><path d="M135.5 0v120" stroke="#000" stroke-width="3"/>';
p += '<path d="M.5 6.5L1350.5 119.5" stroke="#008c00"/><path d="M.5 6.5H1350.5" stroke="#0000c8"/>';
for (let i = 0; i <= 10; i++) {
  if (i) p += '<rect x="' + (X(i) - 1.5) + '" y="' + Math.round(Y(i / 2) - 1.5) + '" width="3" height="3" fill="#008c00"/>';
  p += '<rect x="' + (X(i) - 1.5) + '" y="5" width="3" height="3" fill="#0000c8"/>';
}
document.getElementById('plot').innerHTML = p;
let t = '<span></span>';
for (let i = 1; i < 9; i++) t += '<span>' + i + '.e-3</span>';
document.getElementById('times').innerHTML = t + '<span class="flex justify-between"><span>9.e-3</span><span>1.e-2</span></span>';
let s = '';
for (let i = 1; i <= 10; i++) s += '<button class="' + (i === 1
  ? 'h-[15px] border-y border-r border-[#a0a0a0] bg-[#0078d7] leading-[13px] text-white'
  : 'h-[15px] border-y border-r border-[#a0a0a0] bg-[#f0f0f0] leading-[13px]') + '">' + i + '</button>';
document.getElementById('steps').innerHTML = s;
</script>
</body>
</html>
